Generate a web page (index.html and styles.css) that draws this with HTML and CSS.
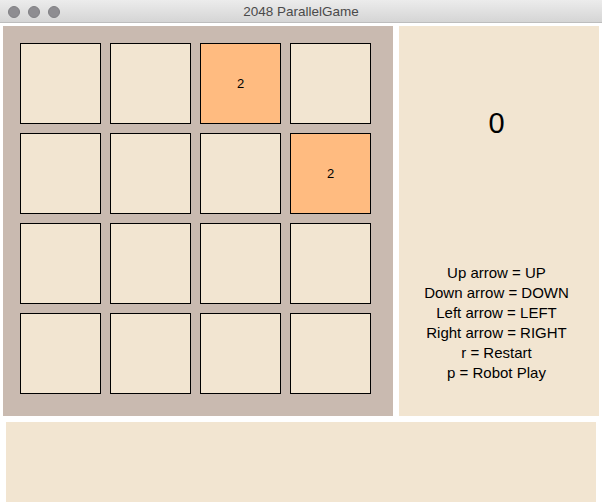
FILE: index.html
```html
<!DOCTYPE html>
<html>
<head>
<meta charset="utf-8">
<title>2048 ParallelGame</title>
<link rel="stylesheet" href="styles.css">
</head>
<body>
<div class="window">
  <div class="titlebar">
    <div class="lights">
      <span class="light"></span>
      <span class="light"></span>
      <span class="light"></span>
    </div>
    <div class="title">2048 ParallelGame</div>
  </div>
  <div class="top">
    <div class="board">
      <div class="tile"></div>
      <div class="tile"></div>
      <div class="tile filled">2</div>
      <div class="tile"></div>
      <div class="tile"></div>
      <div class="tile"></div>
      <div class="tile"></div>
      <div class="tile filled">2</div>
      <div class="tile"></div>
      <div class="tile"></div>
      <div class="tile"></div>
      <div class="tile"></div>
      <div class="tile"></div>
      <div class="tile"></div>
      <div class="tile"></div>
      <div class="tile"></div>
    </div>
    <div class="panel">
      <div class="score">0</div>
      <div class="help">
        <div>Up arrow = UP</div>
        <div>Down arrow = DOWN</div>
        <div>Left arrow = LEFT</div>
        <div>Right arrow = RIGHT</div>
        <div>r = Restart</div>
        <div>p = Robot Play</div>
      </div>
    </div>
  </div>
  <div class="bottom"></div>
</div>
</body>
</html>
```
FILE: styles.css
```css
html, body {
  margin: 0;
  padding: 0;
  background: #ffffff;
}
body {
  font-family: "Liberation Sans", Arial, sans-serif;
  width: 602px;
  height: 504px;
  overflow: hidden;
}
.window {
  display: flex;
  flex-direction: column;
  width: 602px;
}
.titlebar {
  position: relative;
  height: 22px;
  border-bottom: 1px solid #bdbdbd;
  background: linear-gradient(#ececec, #d5d5d5);
  display: flex;
  align-items: center;
  justify-content: center;
}
.lights {
  position: absolute;
  left: 8px;
  top: 6px;
  display: flex;
  gap: 8px;
}
.light {
  width: 12px;
  height: 12px;
  border-radius: 50%;
  background: #8e8d91;
  box-sizing: border-box;
  border: 1px solid #808084;
}
.title {
  font-size: 13.5px;
  color: #4a4a4a;
  margin-top: 1px;
}
.top {
  display: flex;
  gap: 6px;
  margin: 3px 0 0 3px;
}
.board {
  width: 390px;
  height: 390px;
  box-sizing: border-box;
  padding: 17px 0 0 17px;
  background: #c9bab0;
  display: grid;
  grid-template-columns: repeat(4, 81px);
  grid-template-rows: repeat(4, 81px);
  gap: 9px;
}
.tile {
  box-sizing: border-box;
  border: 1px solid #000000;
  background: #f2e5d1;
  display: flex;
  align-items: center;
  justify-content: center;
  font-size: 13px;
  color: #000000;
}
.tile.filled {
  background: #ffbb80;
}
.panel {
  width: 200px;
  height: 390px;
  box-sizing: border-box;
  background: #f2e5d1;
  padding: 80px 5px 0 0;
  display: flex;
  flex-direction: column;
  align-items: center;
  text-align: center;
  color: #000000;
}
.score {
  font-size: 29px;
  line-height: 34px;
}
.help {
  margin-top: 123px;
  font-size: 15px;
  line-height: 20px;
}
.bottom {
  margin: 6px 0 0 6px;
  width: 590px;
  height: 80px;
  background: #f2e5d1;
}
```
